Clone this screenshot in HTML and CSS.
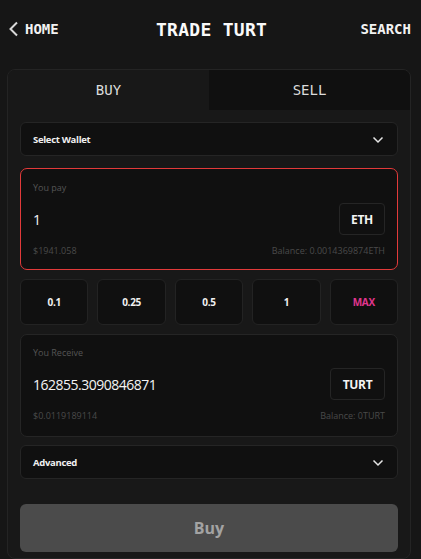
FILE: index.html
```html
<!DOCTYPE html>
<html>
<head>
<meta charset="utf-8">
<link rel="stylesheet" href="styles.css">
</head>
<body>
<header class="top">
  <div class="nav-left">
    <svg class="back" width="11" height="16" viewBox="0 0 11 16"><path d="M9 1.5 L2.5 8 L9 14.5" fill="none" stroke="#d8d8d8" stroke-width="2"/></svg>
    <span class="pix small">HOME</span>
  </div>
  <div class="pix title">TRADE TURT</div>
  <div class="pix small">SEARCH</div>
</header>
<main class="card">
  <div class="tabs">
    <div class="tab active pix">BUY</div>
    <div class="tab pix">SELL</div>
  </div>
  <div class="body">
    <div class="select">
      <span>Select Wallet</span>
      <svg width="12" height="8" viewBox="0 0 12 8"><path d="M1.5 1.5 L6 6 L10.5 1.5" fill="none" stroke="#e6e6e6" stroke-width="1.5"/></svg>
    </div>
    <div class="box pay">
      <div class="label">You pay</div>
      <div class="row main">
        <span class="amount">1</span>
        <span class="token">ETH</span>
      </div>
      <div class="row meta">
        <span>$1941.058</span>
        <span>Balance: 0.0014369874ETH</span>
      </div>
    </div>
    <div class="quick">
      <div class="q">0.1</div>
      <div class="q">0.25</div>
      <div class="q">0.5</div>
      <div class="q">1</div>
      <div class="q max">MAX</div>
    </div>
    <div class="box recv">
      <div class="label">You Receive</div>
      <div class="row main">
        <span class="amount">162855.3090846871</span>
        <span class="token wide">TURT</span>
      </div>
      <div class="row meta">
        <span>$0.0119189114</span>
        <span>Balance: 0TURT</span>
      </div>
    </div>
    <div class="select adv">
      <span>Advanced</span>
      <svg width="12" height="8" viewBox="0 0 12 8"><path d="M1.5 1.5 L6 6 L10.5 1.5" fill="none" stroke="#e6e6e6" stroke-width="1.5"/></svg>
    </div>
    <button class="buy">Buy</button>
  </div>
</main>
</body>
</html>
```
FILE: styles.css
```css
html, body {
  margin: 0;
  padding: 0;
  background: #161616;
  color: #fff;
  font-family: "Open Sans", "Liberation Sans", sans-serif;
  overflow: hidden;
}
.pix {
  font-family: "DejaVu Sans Mono", monospace;
  font-weight: bold;
  text-transform: uppercase;
}
.top {
  height: 58px;
  display: flex;
  align-items: center;
  justify-content: space-between;
  padding: 0 10px 0 8px;
}
.nav-left {
  display: flex;
  align-items: center;
  gap: 6px;
}
.back { display: block; }
.small {
  font-size: 14px;
  color: #f2f2f2;
}
.title {
  font-size: 18px;
  letter-spacing: 0.3px;
  color: #fafafa;
  margin-left: 4px;
}
.card {
  margin: 11px 10px 0 7px;
  background: #181818;
  border: 1px solid #242424;
  border-radius: 8px;
  overflow: hidden;
  height: 488px;
}
.tabs {
  display: grid;
  grid-template-columns: 1fr 1fr;
  height: 40px;
}
.tab {
  display: flex;
  align-items: center;
  justify-content: center;
  font-size: 14px;
  font-weight: normal;
  color: #dcdcdc;
  background: #101010;
}
.tab.active {
  background: #181818;
}
.body {
  padding: 12px 12px 0;
  display: flex;
  flex-direction: column;
}
.select {
  height: 32px;
  background: #101010;
  border: 1px solid #252525;
  border-radius: 6px;
  display: flex;
  align-items: center;
  justify-content: space-between;
  padding: 0 13px 0 12px;
  font-size: 9.5px;
  font-weight: bold;
  color: #f0f0f0;
  letter-spacing: -0.3px;
}
.select svg { display: block; margin-top: 1px; }
.box {
  background: #101010;
  border: 1px solid #252525;
  border-radius: 7px;
  padding: 12px 12px 12px;
  display: flex;
  flex-direction: column;
}
.pay {
  margin-top: 12px;
  border-color: #e23a3a;
}
.recv {
  margin-top: 9px;
  padding-top: 11px;
  padding-bottom: 14px;
}
.label {
  font-size: 9px;
  color: #555;
  line-height: 14px;
}
.row {
  display: flex;
  align-items: center;
  justify-content: space-between;
}
.row.main {
  margin-top: 8px;
}
.amount {
  font-size: 14px;
  color: #f4f4f4;
  letter-spacing: -0.5px;
}
.token {
  width: 46px;
  height: 32px;
  box-sizing: border-box;
  border: 1px solid #252525;
  border-radius: 4px;
  display: flex;
  align-items: center;
  justify-content: center;
  font-size: 12px;
  font-weight: bold;
  color: #f4f4f4;
  letter-spacing: -0.3px;
}
.token.wide {
  width: 55px;
}
.meta {
  margin-top: 10px;
  font-size: 9px;
  color: #4a4a4a;
  line-height: 12px;
}
.quick {
  margin-top: 9px;
  display: grid;
  grid-template-columns: repeat(5, 1fr);
  gap: 9px;
}
.q {
  height: 46px;
  box-sizing: border-box;
  background: #101010;
  border: 1px solid #232323;
  border-radius: 6px;
  display: flex;
  align-items: center;
  justify-content: center;
  font-size: 10px;
  font-weight: bold;
  color: #f0f0f0;
  letter-spacing: -0.3px;
}
.q.max { color: #e0368f; }
.adv { margin-top: 8px; }
.buy {
  margin-top: 25px;
  height: 48px;
  border: none;
  border-radius: 6px;
  background: #4b4b4b;
  color: #a3a3a3;
  font-family: "Open Sans", "Liberation Sans", sans-serif;
  font-size: 16px;
  font-weight: bold;
}
```
